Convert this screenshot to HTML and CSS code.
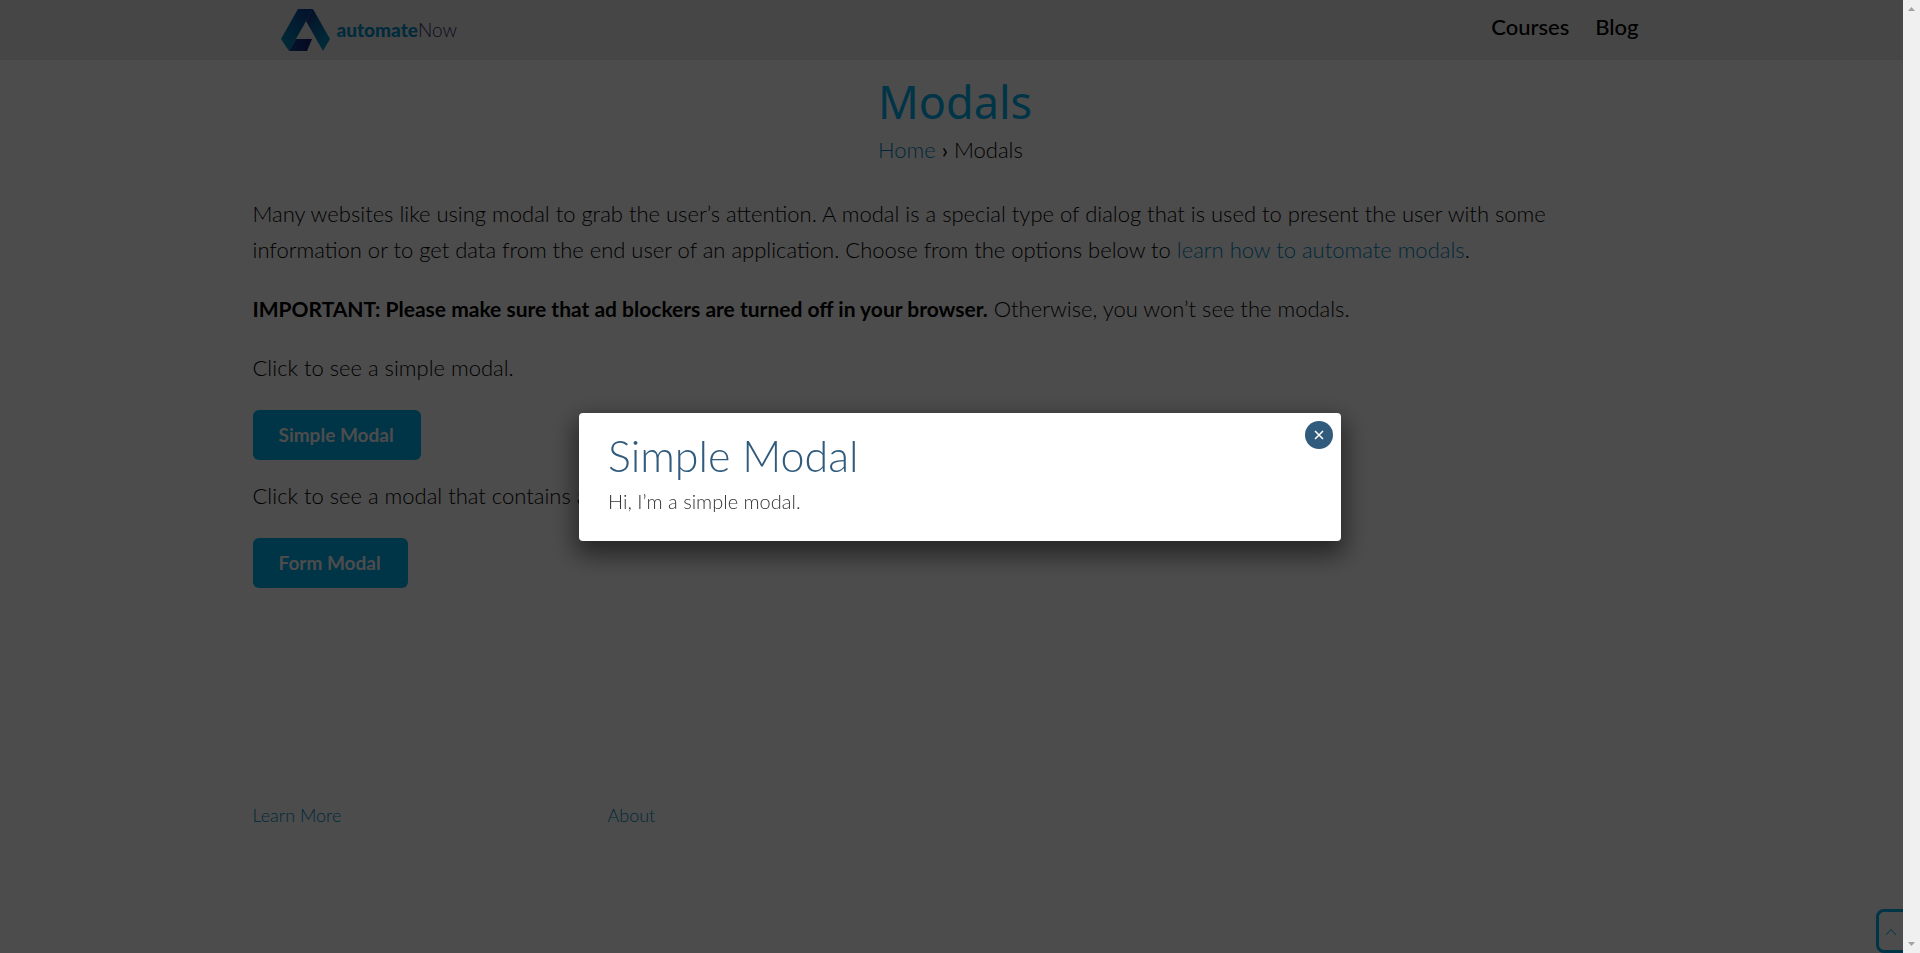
FILE: index.html
```html
<!DOCTYPE html>
<html lang="en">
<head>
<meta charset="utf-8">
<title>Modals</title>
<link rel="stylesheet" href="styles.css">
</head>
<body>
<div class="page">
  <header class="site-header">
    <div class="header-inner">
      <a class="brand" href="#" aria-label="automateNow">
        <svg class="brand-mark" viewBox="0 0 49 42" aria-hidden="true">
          <defs>
            <linearGradient id="left" x1="0.8" y1="0" x2="0.2" y2="1"><stop offset="0" stop-color="#0b3f96"/><stop offset="1" stop-color="#0090b8"/></linearGradient>
            <linearGradient id="right" x1="0.2" y1="0" x2="0.8" y2="1"><stop offset="0" stop-color="#1a2a78"/><stop offset="0.35" stop-color="#0b5f9f"/><stop offset="1" stop-color="#0098c0"/></linearGradient>
            <linearGradient id="base" x1="0" y1="0" x2="1" y2="0"><stop offset="0" stop-color="#0b4690"/><stop offset="1" stop-color="#1b1a70"/></linearGradient>
          </defs>
          <path fill="url(#left)" d="M17 0H32L8 42L0 30Z"/>
          <path fill="url(#right)" d="M32 0L49 30L42 42L25 12Z"/>
          <path fill="url(#base)" d="M15 30H31L26 42H8Z"/>
        </svg>
        <span class="brand-name"><b>automate</b>Now</span>
      </a>
      <nav class="site-nav">
        <a href="#">Courses</a>
        <a href="#">Blog</a>
      </nav>
    </div>
  </header>
  <main class="content">
    <div class="title-block">
      <h1>Modals</h1>
      <nav class="breadcrumb"><a href="#">Home</a> <b>›</b> Modals</nav>
    </div>
    <p>Many websites like using modal to grab the user’s attention. A modal is a special type of dialog that is used to present the user with some<br>information or to get data from the end user of an application. Choose from the options below to <a href="#">learn how to automate modals</a>.</p>
    <p><strong>IMPORTANT: Please make sure that ad blockers are turned off in your browser.</strong> Otherwise, you won’t see the modals.</p>
    <p>Click to see a simple modal.</p>
    <button class="cta" type="button">Simple Modal</button>
    <p>Click to see a modal that contains a form.</p>
    <button class="cta" type="button">Form Modal</button>
  </main>
  <footer class="site-footer">
    <a href="#">Learn More</a>
    <a href="#">About</a>
  </footer>
  <button class="to-top" type="button" aria-label="Back to top">
    <svg viewBox="0 0 12 8" aria-hidden="true"><path d="M1 7L6 1.500L11 7"/></svg>
  </button>
</div>
<div class="overlay">
  <section class="modal" role="dialog" aria-labelledby="modal-title">
    <h2 id="modal-title">Simple Modal</h2>
    <p>Hi, I’m a simple modal.</p>
    <button class="close" type="button" aria-label="Close">
      <svg viewBox="0 0 10 10" aria-hidden="true"><path d="M1 1L9 9M9 1L1 9"/></svg>
    </button>
  </section>
</div>
<div class="scrollbar" aria-hidden="true">
  <svg viewBox="0 0 7 4"><path d="M0 4L3.500 0L7 4Z"/></svg>
  <svg viewBox="0 0 7 4"><path d="M0 0L3.500 4L7 0Z"/></svg>
</div>
</body>
</html>
```
FILE: styles.css
```css
* { box-sizing: border-box; }
body {
  margin: 0;
  background: #fff;
  color: #000;
  font: 300 22px/36px Lato, sans-serif;
  overflow: hidden;
}
a { color: #0088c2; text-decoration: none; }
button { font-family: inherit; cursor: pointer; }
p { margin: 0 0 23px; }
strong { font-size: 21px; font-weight: 700; }

.page {
  position: relative;
  display: flex;
  flex-direction: column;
  min-height: 100vh;
  margin-right: 17px;
}
.site-header { background: #e9e9e9; }
.header-inner {
  display: flex;
  align-items: center;
  justify-content: space-between;
  height: 60px;
  max-width: 1400px;
  margin: 0 auto;
  padding: 0 13px 0 29px;
}
.brand { display: flex; align-items: center; gap: 7px; }
.brand-mark { width: 49px; height: 42px; }
.brand-name { color: #2a2860; font-size: 19px; font-weight: 300; line-height: 24px; }
.brand-name b { color: #0091c8; font-weight: 900; }
.site-nav { display: flex; gap: 26px; line-height: 54px; height: 60px; }
.site-nav a { color: #000; font-weight: 500; }

.content { width: 100%; max-width: 1400px; margin: 0 auto; padding: 12px 0 0 1px; }
.title-block { width: 148px; margin: 0 auto 28px; }
h1 {
  margin: 0;
  color: #00aeef;
  font: 45px/60px "Noto Sans", sans-serif;
}
.breadcrumb { white-space: nowrap; line-height: 36px; }
.cta {
  display: block;
  margin: 0 0 18px;
  padding: 0 27px 2px 26px;
  height: 50px;
  border: 0;
  border-radius: 6px;
  background: #00aeef;
  color: #fff;
  font-size: 19px;
  font-weight: 700;
}
p + .cta { margin-top: 24px; }

.site-footer {
  display: grid;
  grid-template-columns: repeat(4, 355px);
  width: 100%;
  max-width: 1400px;
  margin: auto auto 120px;
  padding-left: 1px;
  font-size: 18px;
  line-height: 36px;
}
.to-top {
  position: absolute;
  right: -21px;
  bottom: 0;
  width: 48px;
  height: 44px;
  border: 3px solid #00aeef;
  border-radius: 8px;
  background: #fff;
  padding: 0 18px 0 0;
}
.to-top svg { width: 12px; height: 8px; fill: none; stroke: #00aeef; stroke-width: 1; }

.overlay {
  position: fixed;
  inset: 0;
  display: flex;
  align-items: center;
  justify-content: center;
  background: rgba(0, 0, 0, 0.7);
}
.modal {
  position: relative;
  width: 762px;
  padding: 17px 29px 21px;
  border-radius: 4px;
  background: #fff;
  box-shadow: 0 10px 25px 4px rgba(0, 0, 0, 0.5);
}
.modal h2 { margin: 0; color: #315b7c; font-size: 43px; font-weight: 300; line-height: 52px; }
.modal p { margin: 0; color: #333; font-size: 20px; line-height: 38px; }
.close {
  position: absolute;
  top: 8px;
  right: 8px;
  display: grid;
  place-items: center;
  width: 28px;
  height: 28px;
  padding: 0;
  border: 0;
  border-radius: 50%;
  background: #315b7c;
}
.close svg { width: 10px; height: 10px; fill: none; stroke: #fff; stroke-width: 1.500; }

.scrollbar {
  position: fixed;
  top: 0;
  right: 0;
  bottom: 0;
  display: flex;
  flex-direction: column;
  justify-content: space-between;
  align-items: center;
  width: 17px;
  padding: 7px 0;
  background: #f0f0f0;
}
.scrollbar svg { width: 7px; height: 4px; fill: #a3a3a3; }
```
